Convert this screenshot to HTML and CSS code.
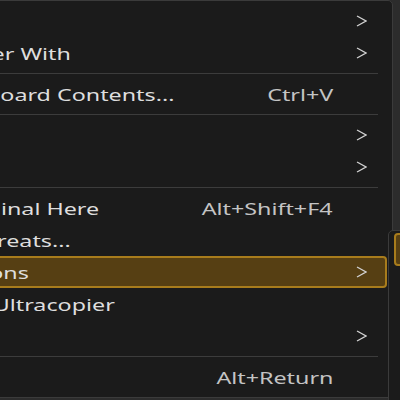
FILE: index.html
```html
<!DOCTYPE html>
<html lang="en">
<head>
  <meta charset="UTF-8" />
  <title>Context menu</title>
  <link rel="stylesheet" href="styles.css">
</head>
<body>

<div class="menu">
  <div class="item"><span class="label">New</span><span></span><svg class="arrow" width="11" height="12" viewBox="0 0 11 12"><polyline points="1,1 10,6 1,11"/></svg></div>
  <div class="item"><span class="label">Open Folder With</span><span></span><svg class="arrow" width="11" height="12" viewBox="0 0 11 12"><polyline points="1,1 10,6 1,11"/></svg></div>
  <div class="sep"></div>
  <div class="item"><span class="label">Paste Clipboard Contents...</span><span class="key">Ctrl+V</span></div>
  <div class="sep"></div>
  <div class="item"><span class="label">Sort By</span><span></span><svg class="arrow" width="11" height="12" viewBox="0 0 11 12"><polyline points="1,1 10,6 1,11"/></svg></div>
  <div class="item"><span class="label">View</span><span></span><svg class="arrow" width="11" height="12" viewBox="0 0 11 12"><polyline points="1,1 10,6 1,11"/></svg></div>
  <div class="sep"></div>
  <div class="item"><span class="label">Open Terminal Here</span><span class="key">Alt+Shift+F4</span></div>
  <div class="item"><span class="label">Scan for threats...</span></div>
  <div class="item active"><span class="label">Other Actions</span><span></span><svg class="arrow" width="11" height="12" viewBox="0 0 11 12"><polyline points="1,1 10,6 1,11"/></svg></div>
  <div class="item"><span class="label">Copy with Ultracopier</span></div>
  <div class="item"><span class="label">Share</span><span></span><svg class="arrow" width="11" height="12" viewBox="0 0 11 12"><polyline points="1,1 10,6 1,11"/></svg></div>
  <div class="sep"></div>
  <div class="item"><span class="label">Properties</span><span class="key">Alt+Return</span></div>
</div>

<div class="submenu">
  <div class="item active"><span class="label">Compress</span></div>
</div>

</body>
</html>
```

FILE: styles.css
```css
* { box-sizing: border-box; }
body {
  margin: 0;
  height: 400px;
  overflow: hidden;
  background: #2c2c2c;
  font-family: 'Noto Sans', 'Open Sans', sans-serif;
  font-size: 17px;
  color: #dedede;
}

.menu {
  width: 543px;
  margin-left: -150px;
  padding: 4px 5px 4px 4px;
  background: #1b1b1b;
  border: 1px solid #3b3b3b;
  border-radius: 0 5px 5px 0;
}

.item {
  display: grid;
  grid-template-columns: 1fr auto 30px;
  align-items: center;
  height: 32px;
  padding: 0 9px 0 22px;
  border: 2px solid transparent;
  border-radius: 4px;
  white-space: nowrap;
}
.item.active {
  background: #563f13;
  border-color: #a87c1c;
}

/* the shot is stretched sideways, so is the text */
.label {
  display: inline-block;
  transform: scaleX(1.37);
  transform-origin: left center;
}
.key {
  display: inline-block;
  margin-right: 13px;
  color: #c4c4c4;
  transform: scaleX(1.37);
  transform-origin: right center;
}

.arrow {
  justify-self: center;
  fill: none;
  stroke: #d2d2d2;
  stroke-width: 1.3;
}

.sep {
  height: 1px;
  margin: 4px 9px 4px 0;
  background: #3c3c3c;
}

.submenu {
  position: absolute;
  left: 388px;
  top: 230px;
  width: 120px;
  height: 180px;
  padding: 2px 0 0 5px;
  background: #1b1b1b;
  border: 1px solid #3b3b3b;
  border-radius: 5px 0 0 0;
}
.submenu .item {
  height: 33px;
  padding-left: 20px;
}
```
